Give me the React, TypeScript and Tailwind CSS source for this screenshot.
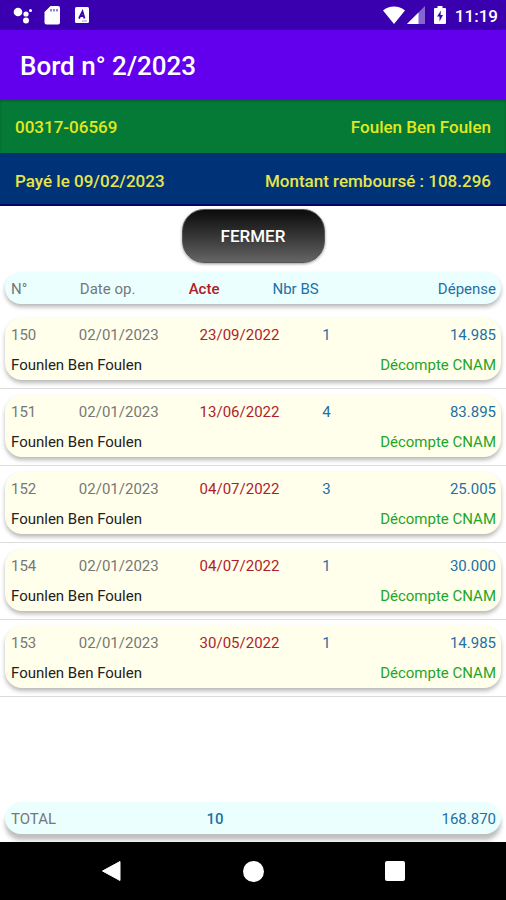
interface Bulletin {
  id: number;
  dateOp: string;
  dateActe: string;
  count: number;
  amount: string;
}

const bulletins: Bulletin[] = [
  { id: 150, dateOp: '02/01/2023', dateActe: '23/09/2022', count: 1, amount: '14.985' },
  { id: 151, dateOp: '02/01/2023', dateActe: '13/06/2022', count: 4, amount: '83.895' },
  { id: 152, dateOp: '02/01/2023', dateActe: '04/07/2022', count: 3, amount: '25.005' },
  { id: 154, dateOp: '02/01/2023', dateActe: '04/07/2022', count: 1, amount: '30.000' },
  { id: 153, dateOp: '02/01/2023', dateActe: '30/05/2022', count: 1, amount: '14.985' },
];

function StatusBar() {
  return (
    <div className="flex h-[30px] items-center justify-between bg-[#3a00b0] pr-2 pl-3 text-white">
      <div className="flex items-center">
        <svg className="h-5 w-5" viewBox="0 0 20 20" fill="currentColor" aria-hidden="true">
          <circle cx="6" cy="7" r="4.3" />
          <circle cx="14" cy="9" r="2.6" />
          <circle cx="14" cy="15.5" r="3" />
          <circle cx="18.5" cy="5.5" r="1.5" />
        </svg>
        <svg className="ml-3 h-5 w-4" viewBox="0 0 16 20" fill="currentColor" aria-hidden="true">
          <path
            fillRule="evenodd"
            d="M6.500 1H14a2 2 0 0 1 2 2v14.500a2 2 0 0 1-2 2H2.500a2 2 0 0 1-2-2V7ZM6.500 4v2.500h1V4ZM9.500 4v2.500h1V4ZM12.500 4v2.500h1V4Z"
          />
        </svg>
        <svg className="ml-[15px] h-4 w-[14px]" viewBox="0 0 14 16" aria-hidden="true">
          <rect width="14" height="16" rx="1.500" fill="currentColor" />
          <path d="M4 11.500 7.500 4.500 9.500 11.500M5.500 9H9" fill="none" stroke="#3a00b0" strokeWidth="1.800" />
          <path d="M7 14h5" stroke="#a58be0" />
        </svg>
      </div>
      <div className="flex items-center">
        <svg className="h-[18px] w-[22px]" viewBox="0 0 22 18" fill="currentColor" aria-hidden="true">
          <path d="M11 18 0 4.500C6-1 16-1 22 4.500Z" />
        </svg>
        <svg className="ml-[2px] h-[18px] w-[18px]" viewBox="0 0 18 18" fill="currentColor" aria-hidden="true">
          <path d="M18 0v18H0Z" opacity="0.4" />
          <path d="M11.500 6.500V18H0Z" />
        </svg>
        <svg className="ml-[9px] h-[18px] w-3" viewBox="0 0 12 18" aria-hidden="true">
          <path d="M3.500 0h5v2H11a1 1 0 0 1 1 1v14a1 1 0 0 1-1 1H1a1 1 0 0 1-1-1V3a1 1 0 0 1 1-1h2.500Z" fill="currentColor" />
          <path d="M7 4.500 3 10.500h2.500V15.500L9 9H6.500Z" fill="#3a00b0" />
        </svg>
        <span className="ml-[9px] pt-[2px] text-[17px] leading-5 font-medium">11:19</span>
      </div>
    </div>
  );
}

function BulletinRow({ bulletin }: { bulletin: Bulletin }) {
  return (
    <tr className="block border-b border-[#dcdcdc] px-[5px] pt-[6px] pb-2">
      <td className="block rounded-[17px] bg-[#ffffeb] shadow-[0_3px_4px_rgba(0,0,0,0.28)]">
        <div className="grid grid-cols-[68fr_121fr_123fr_174fr] pt-[7px] pr-[5px] pl-[6px] text-[#777777]">
          <span>{bulletin.id}</span>
          <span>{bulletin.dateOp}</span>
          <span className="text-[#b01c2a]">{bulletin.dateActe}</span>
          <div className="flex justify-between text-[#2270a5]">
            <span>{bulletin.count}</span>
            <span>{bulletin.amount}</span>
          </div>
        </div>
        <div className="flex justify-between pt-[10px] pr-[5px] pb-[5px] pl-[6px]">
          <span className="text-[#222222]">Founlen Ben Foulen</span>
          <span className="text-[#1fa52a]">Décompte CNAM</span>
        </div>
      </td>
    </tr>
  );
}

function NavigationBar() {
  return (
    <nav className="grid h-[58px] shrink-0 grid-cols-3 items-center bg-black px-10 text-white">
      <button type="button" aria-label="Retour" className="flex justify-center">
        <svg className="h-[22px] w-5" viewBox="0 0 20 22" fill="currentColor">
          <path d="M19 1.500v19L1.500 11Z" stroke="currentColor" strokeLinejoin="round" />
        </svg>
      </button>
      <button type="button" aria-label="Accueil" className="flex justify-center">
        <span className="h-[21px] w-[21px] rounded-full bg-white" />
      </button>
      <button type="button" aria-label="Applications" className="flex justify-center">
        <span className="h-5 w-5 rounded-[2px] bg-white" />
      </button>
    </nav>
  );
}

export default function App() {
  return (
    <div className="flex min-h-screen flex-col bg-white font-['Roboto',sans-serif]">
      <StatusBar />
      <header className="flex h-[69px] items-center bg-[#6200ee] px-5 pt-[3px]">
        <h1 className="text-[26px] leading-8 font-medium text-white">Bord n° 2/2023</h1>
      </header>

      <section className="text-[17px] leading-6 font-medium">
        <div className="flex justify-between bg-[#047a36] px-[15px] pt-4 pb-[14px] text-[#e2e81e] shadow-[inset_0_2px_2px_rgba(0,0,0,0.25)]">
          <span>00317-06569</span>
          <span>Foulen Ben Foulen</span>
        </div>
        <div className="flex justify-between border-b-2 border-[#02036b] bg-[#003278] px-[15px] pt-4 pb-[11px] text-[#e6e648]">
          <span>Payé le 09/02/2023</span>
          <span>Montant remboursé : 108.296</span>
        </div>
      </section>

      <button
        type="button"
        className="mt-[3px] h-[54px] w-[143px] self-center rounded-[22px] border border-[#555555] bg-linear-to-b from-[#0c0c0c] to-[#666666] pt-[2px] text-[17px] font-medium text-white shadow-[0_1px_3px_rgba(0,0,0,0.4)]"
      >
        FERMER
      </button>

      <table className="mt-[9px] flex grow flex-col text-[15px] leading-5">
        <thead className="block px-[5px] pb-2">
          <tr className="grid grid-cols-[69fr_109fr_84fr_224fr] rounded-2xl bg-[#ebffff] pt-[7px] pr-[5px] pb-[5px] pl-[6px] text-left text-[#777777] shadow-[0_3px_4px_rgba(0,0,0,0.28)]">
            <th className="font-normal">N°</th>
            <th className="font-normal">Date op.</th>
            <th className="font-medium text-[#b01c2a]">Acte</th>
            <th className="flex justify-between font-normal text-[#2270a5]">
              <span>Nbr BS</span>
              <span>Dépense</span>
            </th>
          </tr>
        </thead>
        <tbody className="block">
          {bulletins.map((bulletin) => (
            <BulletinRow key={bulletin.id} bulletin={bulletin} />
          ))}
        </tbody>
        <tfoot className="mt-auto block overflow-hidden px-[5px] pt-1 pb-2">
          <tr className="grid grid-cols-[196fr_290fr] rounded-2xl bg-[#ebffff] pt-[7px] pr-[5px] pb-[5px] pl-[6px] text-left text-[#2270a5] shadow-[0_6px_4px_rgba(0,0,0,0.25)]">
            <th className="font-normal text-[#777777]">TOTAL</th>
            <td className="flex justify-between">
              <span className="font-medium">10</span>
              <span>168.870</span>
            </td>
          </tr>
        </tfoot>
      </table>

      <NavigationBar />
    </div>
  );
}
